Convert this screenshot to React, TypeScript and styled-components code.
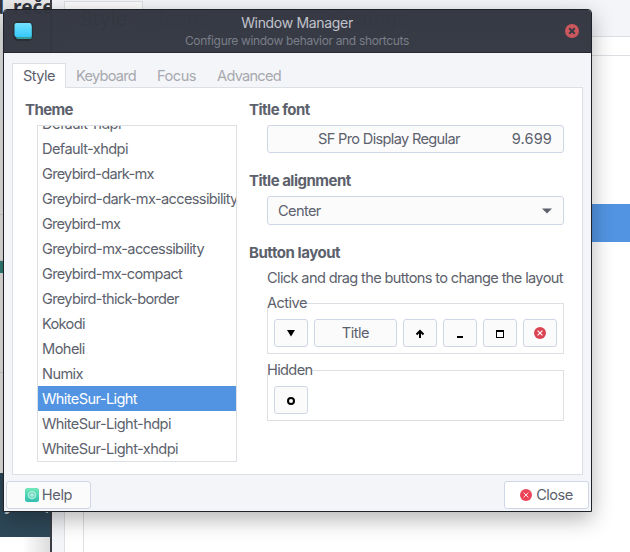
import React from "react";
import styled, { createGlobalStyle } from "styled-components";

const GlobalStyle = createGlobalStyle`
  * { box-sizing: border-box; }
  html, body { margin: 0; overflow: hidden; }
  body { font-family: Inter, "Liberation Sans", sans-serif; font-size: 15px; color: #5c616c; }
`;

const Desktop = styled.div`
  position: relative;
  display: flex;
  width: 630px;
  height: 552px;
  overflow: hidden;
  background: #fff;
`;

/* Windows behind the dialog */
const BrowserWindow = styled.div`
  display: flex;
  flex-direction: column;
  width: 52px;
  border-right: 2px solid #3a3d45;
  background: #e9e8e6;
`;
const BrowserHead = styled.div`
  display: flex;
  flex: none;
  gap: 9px;
  height: 120px;
  margin-left: -8px;
  overflow: hidden;
  background: #e9e9e9;
  color: #30343c;
  font: 700 19px/15px "Noto Sans", sans-serif;
`;
const BrowserLine = styled.div<{ $h: number }>`
  height: ${(p) => p.$h}px;
  border-bottom: 1px solid #d2d2d0;
`;
const GlyphEdge = styled.div<{ $c: string }>`
  width: 3px;
  height: 12px;
  background: ${(p) => p.$c};
`;
const BrowserFooter = styled.div`
  height: 64px;
  margin-top: auto;
  padding: 23px 0 0 6px;
  overflow: hidden;
  background: #2e4859;
  color: #c7d0d4;
  font: italic 700 15px/18px "Noto Sans", sans-serif;
`;
const BrowserPage = styled.div`
  height: 15px;
  background: linear-gradient(90deg, #fff 45%, #ddd);
`;
const Settings = styled.div`
  display: flex;
  flex-direction: column;
  flex: 1;
  padding-left: 12px;
  background: #f4f5f8;
`;
const SettingsTabs = styled.div`
  display: flex;
  height: 36px;
  padding-top: 1px;
`;
const SettingsTab = styled.div<{ $w: number; $active?: boolean }>`
  width: ${(p) => p.$w}px;
  height: 35px;
  border: 1px solid ${(p) => (p.$active ? "#dcdfe3" : "transparent")};
  background: ${(p) => (p.$active ? "#fbfbfb" : "transparent")};
  color: ${(p) => (p.$active ? "#5c616c" : "#a6a8ae")};
  font-size: 20px;
  line-height: 35px;
  text-align: center;
`;
const SettingsPage = styled.div`
  flex: 1;
  padding: 18px 0 0 18px;
  border: solid #dcdfe3;
  border-width: 1px 0 0 1px;
  background: #fff;
`;
const SettingsList = styled.div`
  height: 100%;
  padding-top: 148px;
  border: solid #dcdfe3;
  border-width: 1px 0 0 1px;
`;
const SettingsSelected = styled.div`
  height: 38px;
  background: #5294e2;
`;

/* Dialog floats over the other windows */
const Dialog = styled.div`
  position: absolute;
  left: 3px;
  top: 9px;
  display: flex;
  flex-direction: column;
  width: 589px;
  height: 503px;
  overflow: hidden;
  border: 1px solid #202229;
  border-radius: 4px 4px 0 0;
`;
const DialogShadow = styled.div`
  position: absolute;
  left: 3px;
  top: 9px;
  width: 589px;
  height: 503px;
  border-radius: 4px 4px 0 0;
  box-shadow: 0 7px 22px rgba(0, 0, 0, 0.3);
`;
const TitleBar = styled.header`
  display: flex;
  align-items: center;
  justify-content: space-between;
  flex: none;
  height: 43px;
  padding: 0 12px 0 8px;
  border-bottom: 1px solid #262832;
  background: linear-gradient(rgba(51, 54, 64, 0.98), rgba(52, 56, 66, 0.98));
`;
const DialogBody = styled.div`
  flex: 1;
  background: #f4f5f8;
`;
const Titles = styled.div`
  display: flex;
  flex-direction: column;
  align-items: center;
  padding: 1px 7px 0 0;
`;
const Label = styled.span<{ $ls?: number; $size?: number; $color?: string; $bold?: boolean; $lh?: number; $gap?: number }>`
  margin-left: ${(p) => p.$gap ?? 0}px;
  white-space: nowrap;
  letter-spacing: ${(p) => p.$ls ?? -0.5}px;
  font-size: ${(p) => p.$size ?? (p.$bold ? 15 : 14.6)}px;
  font-weight: ${(p) => (p.$bold ? 700 : 400)};
  line-height: ${(p) => p.$lh ?? 20}px;
  color: ${(p) => p.$color ?? "inherit"};
`;
const TabBar = styled.nav`
  display: flex;
  align-items: flex-end;
  height: 35px;
  margin: 0 8px -1px;
`;
const Tab = styled.div<{ $w: number; $active?: boolean }>`
  position: relative;
  z-index: ${(p) => (p.$active ? 1 : 0)};
  display: flex;
  justify-content: center;
  width: ${(p) => p.$w}px;
  height: 25px;
  padding-top: 2px;
  border: ${(p) => (p.$active ? "1px solid #dcdfe3" : "1px solid transparent")};
  border-bottom: 0;
  background: ${(p) => (p.$active ? "#fff" : "transparent")};
  color: ${(p) => (p.$active ? "#5c616c" : "#a6a8ae")};
`;
const Page = styled.main`
  display: flex;
  height: 388px;
  margin: 0 8px;
  padding: 12px 18px 0 12px;
  border: 1px solid #dcdfe3;
  background: #fff;
`;
const ThemeColumn = styled.section`
  display: flex;
  flex-direction: column;
  width: 224px;
`;
const ThemeList = styled.div`
  display: flex;
  flex-direction: column;
  justify-content: flex-end;
  width: 200px;
  height: 337px;
  margin: 5px 0 0 12px;
  overflow: hidden;
  border: 1px solid #dcdfe3;
`;
const ThemeRow = styled.div<{ $selected?: boolean }>`
  display: flex;
  flex: none;
  height: 25px;
  padding: 3px 0 0 4px;
  color: ${(p) => (p.$selected ? "#fff" : "inherit")};
  background: ${(p) => (p.$selected ? "#5294e2" : "transparent")};
`;
const Options = styled.section`
  display: flex;
  flex-direction: column;
  width: 315px;
`;
const Indented = styled.div<{ $top: number; $bottom?: number }>`
  display: flex;
  margin: ${(p) => p.$top}px 0 ${(p) => p.$bottom ?? 0}px 18px;
`;
const Control = styled.button<{ $w: number; $h?: number; $pad?: string; $between?: boolean; $bg?: string }>`
  display: flex;
  align-items: center;
  justify-content: ${(p) => (p.$between ? "space-between" : "center")};
  flex: none;
  width: ${(p) => p.$w}px;
  height: ${(p) => p.$h ?? 28}px;
  padding: ${(p) => p.$pad ?? "0"};
  border: 1px solid #cfd6e6;
  border-radius: 3px;
  background: ${(p) => p.$bg ?? "#fbfbfc"};
  color: #5c616c;
  font: inherit;
`;
const Frame = styled.div<{ $top?: number }>`
  width: 297px;
  height: 51px;
  margin: ${(p) => p.$top ?? 0}px 0 0 18px;
  border: 1px solid #dcdfe3;
`;
const FrameLabel = styled.div`
  display: flex;
  width: max-content;
  height: 15px;
  margin: -11px 0 0 -1px;
  background: #fff;
`;
const FrameButtons = styled.div`
  display: flex;
  gap: 6px;
  padding: 11px 6px 0;
`;
const Footer = styled.footer`
  display: flex;
  justify-content: space-between;
  padding: 6px 2px 0;
`;

const AppIcon = () => (
  <svg width="24" height="24" viewBox="0 0 24 24">
    <defs>
      <linearGradient id="screen" x1="0" y1="0" x2="0" y2="1">
        <stop stopColor="#75e2ff" />
        <stop offset="1" stopColor="#35c9fb" />
      </linearGradient>
    </defs>
    <rect x="1" y="2.5" width="20" height="19.5" rx="5" fill="#292f35" />
    <path d="M4 7h16v10.5q0 2.500-2 2.500H6q-2 0-2-2z" fill="#379e9e" />
    <rect x="2.500" y="4" width="17" height="14" rx="2" fill="url(#screen)" />
  </svg>
);
const CrossIcon = ({ size, fill, cross, thick }: { size: number; fill: string; cross: string; thick: number }) => (
  <svg width={size} height={size} viewBox="0 0 14 14">
    <circle cx="7" cy="7" r="7" fill={fill} />
    <path d="M4.200 4.200l5.600 5.600M9.800 4.200l-5.600 5.600" stroke={cross} strokeWidth={thick} />
  </svg>
);
const HelpIcon = () => (
  <svg width="14" height="14" viewBox="0 0 14 14">
    <defs>
      <linearGradient id="help" x1="0" y1="0" x2="0" y2="1">
        <stop stopColor="#70e8b8" />
        <stop offset="1" stopColor="#31bfb0" />
      </linearGradient>
    </defs>
    <rect width="14" height="14" rx="2.500" fill="url(#help)" />
    <circle cx="7" cy="7" r="3.500" fill="#62d2b8" stroke="#a9eedb" strokeWidth="1.500" />
    <path d="M7 5v4M5 7h4" stroke="#d5f8ee" strokeWidth="1" />
  </svg>
);
const Glyph = ({ kind }: { kind: string }) => (
  <svg width="16" height="16" viewBox="0 0 16 16" fill="none" stroke="#000" strokeWidth="2">
    {kind === "menu" && <path d="M4 5h8L8 11.500z" fill="#000" stroke="none" />}
    {kind === "shade" && <path d="M8 13V6M4.500 9.500L8 6l3.500 3.500" />}
    {kind === "min" && <path d="M5 12h6" />}
    {kind === "max" && <path d="M4 5h8v8H4zM5 7v5h6V7z" fill="#000" fillRule="evenodd" stroke="none" />}
    {kind === "stick" && <circle cx="8" cy="9" r="3" />}
  </svg>
);

const themes: [string, number][] = [
  ["Default-hdpi", -0.6],
  ["Default-xhdpi", -0.6],
  ["Greybird-dark-mx", -0.75],
  ["Greybird-dark-mx-accessibility", -0.65],
  ["Greybird-mx", -0.78],
  ["Greybird-mx-accessibility", -0.65],
  ["Greybird-mx-compact", -0.7],
  ["Greybird-thick-border", -0.68],
  ["Kokodi", -0.68],
  ["Moheli", -0.55],
  ["Numix", -0.6],
  ["WhiteSur-Light", -0.6],
  ["WhiteSur-Light-hdpi", -0.58],
  ["WhiteSur-Light-xhdpi", -0.58],
];

export default function App() {
  return (
    <Desktop>
      <GlobalStyle />
      <BrowserWindow>
        <BrowserHead><span>d</span><span>reče</span></BrowserHead>
        <BrowserLine $h={95} />
        <BrowserLine $h={46} />
        <GlyphEdge $c="#327f78" />
        <BrowserLine $h={100} />
        <BrowserFooter>youto,</BrowserFooter>
        <BrowserPage />
      </BrowserWindow>
      <Settings>
        <SettingsTabs>
          <SettingsTab $w={79} $active>Style</SettingsTab>
          <SettingsTab $w={82}>Icons</SettingsTab>
          <SettingsTab $w={90}>Fonts</SettingsTab>
          <SettingsTab $w={110}>Settings</SettingsTab>
        </SettingsTabs>
        <SettingsPage>
          <SettingsList>
            <SettingsSelected />
          </SettingsList>
        </SettingsPage>
      </Settings>
      <DialogShadow />
      <Dialog>
        <TitleBar>
          <AppIcon />
          <Titles>
            <Label $color="#c0c3cb" $size={14} $ls={-0.32} $lh={18}>Window Manager</Label>
            <Label $color="#7a7e89" $size={12} $ls={-0.34} $lh={18}>Configure window behavior and shortcuts</Label>
          </Titles>
          <CrossIcon size={14} fill="#cc575d" cross="#383c46" thick={2} />
        </TitleBar>
        <DialogBody>
          <TabBar>
            <Tab $w={54} $active><Label>Style</Label></Tab>
            <Tab $w={80}><Label $ls={-0.75}>Keyboard</Label></Tab>
            <Tab $w={61}><Label>Focus</Label></Tab>
            <Tab $w={84}><Label $ls={-0.75}>Advanced</Label></Tab>
          </TabBar>
          <Page>
            <ThemeColumn>
              <Label $bold $ls={-0.6}>Theme</Label>
              <ThemeList>
                {themes.map(([name, ls]) => (
                  <ThemeRow key={name} $selected={name === "WhiteSur-Light"}>
                    <Label $ls={ls}>{name}</Label>
                  </ThemeRow>
                ))}
              </ThemeList>
            </ThemeColumn>
            <Options>
              <Label $bold>Title font</Label>
              <Indented $top={5} $bottom={18}>
                <Control $w={297} $between $pad="0 11px 0 50px">
                  <Label $ls={-0.67}>SF Pro Display Regular</Label>
                  <Label $ls={0.1}>9.699</Label>
                </Control>
              </Indented>
              <Label $bold>Title alignment</Label>
              <Indented $top={5} $bottom={18}>
                <Control $w={297} $h={29} $between $pad="0 11px 0 10px">
                  <Label $ls={-0.62}>Center</Label>
                  <svg width="10" height="6" viewBox="0 0 10 6"><path d="M0 0.500h10L5 5.500z" fill="#5c616c" /></svg>
                </Control>
              </Indented>
              <Label $bold $ls={-0.45}>Button layout</Label>
              <Indented $top={5} $bottom={15}>
                <Label $ls={-0.64}>Click and drag the buttons to change the layout</Label>
              </Indented>
              <Frame>
                <FrameLabel><Label $ls={-0.55}>Active</Label></FrameLabel>
                <FrameButtons>
                  <Control $w={34}><Glyph kind="menu" /></Control>
                  <Control $w={83}><Label>Title</Label></Control>
                  <Control $w={34}><Glyph kind="shade" /></Control>
                  <Control $w={34}><Glyph kind="min" /></Control>
                  <Control $w={34}><Glyph kind="max" /></Control>
                  <Control $w={34}><CrossIcon size={12} fill="#da4453" cross="#fff" thick={1.3} /></Control>
                </FrameButtons>
              </Frame>
              <Frame $top={16}>
                <FrameLabel><Label $ls={-0.65}>Hidden</Label></FrameLabel>
                <FrameButtons>
                  <Control $w={34}><Glyph kind="stick" /></Control>
                </FrameButtons>
              </Frame>
            </Options>
          </Page>
          <Footer>
            <Control $w={85}><HelpIcon /><Label $gap={3} $ls={-0.35}>Help</Label></Control>
            <Control $w={85} $bg="#fff"><CrossIcon size={12} fill="#ed4558" cross="#fff" thick={1} /><Label $gap={4}>Close</Label></Control>
          </Footer>
        </DialogBody>
      </Dialog>
    </Desktop>
  );
}
